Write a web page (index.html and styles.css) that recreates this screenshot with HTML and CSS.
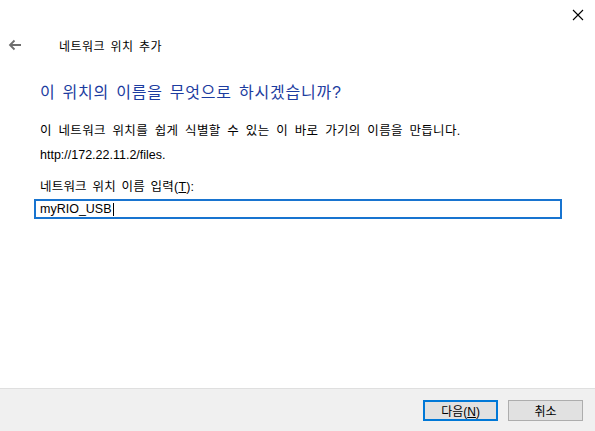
FILE: index.html
```html
<!DOCTYPE html>
<html lang="ko">
<head>
<meta charset="utf-8">
<link rel="stylesheet" href="styles.css">
</head>
<body>
<div class="window">
  <div class="titlebar">
    <svg class="close" width="12" height="12" viewBox="0 0 12 12"><path d="M1 1 L11 11 M11 1 L1 11" stroke="#000" stroke-width="1.1" fill="none"/></svg>
  </div>
  <div class="nav">
    <svg class="back" width="14" height="12" viewBox="0 0 14 12"><path d="M13 6 H2 M6.5 1.5 L2 6 L6.5 10.5" stroke="#6e6e6e" stroke-width="1.8" fill="none"/></svg>
    <span class="navtitle">네트워크 위치 추가</span>
  </div>
  <div class="content">
    <h1 class="heading">이 위치의 이름을 무엇으로 하시겠습니까?</h1>
    <p class="desc">이 네트워크 위치를 쉽게 식별할 수 있는 이 바로 가기의 이름을 만듭니다.</p>
    <p class="url">http://172.22.11.2/files.</p>
    <label class="label">네트워크 위치 이름 입력(<u>T</u>):</label>
    <div class="input">myRIO_USB<span class="caret"></span></div>
  </div>
  <div class="footer">
    <button class="btn primary">다음(<u>N</u>)</button>
    <button class="btn">취소</button>
  </div>
</div>
</body>
</html>
```
FILE: styles.css
```css
html, body { margin: 0; padding: 0; background: #fff; }
body { font-family: "Liberation Sans", "Noto Sans CJK KR", sans-serif; color: #000; }
.window { width: 595px; height: 431px; display: flex; flex-direction: column; }
.titlebar { height: 30px; display: flex; justify-content: flex-end; align-items: center; padding-right: 11px; }
.close { display: block; }
.nav { height: 30px; display: flex; align-items: center; }
.back { margin-left: 8px; }
.navtitle { margin-left: 37px; font-size: 12px; letter-spacing: 0.5px; word-spacing: 1.5px; }
.content { flex: 1; padding-left: 40px; padding-right: 33px; }
.heading { margin: 22px 0 0; font-size: 16px; font-weight: normal; color: #1c3ca0; line-height: 22px; letter-spacing: 0.8px; word-spacing: 1.8px; }
.desc { margin: 18px 0 0; font-size: 12.5px; line-height: 18px; letter-spacing: 0.3px; word-spacing: 3px; }
.url { margin: 6px 0 0; font-size: 12.5px; line-height: 18px; }
.label { display: block; margin: 14px 0 0; font-size: 12.5px; line-height: 18px; letter-spacing: 0.2px; word-spacing: 2px; }
.input { margin: 3px 0 0 -6px; height: 16px; border: 2px solid #1874d0; font-size: 12.5px; line-height: 16px; padding-left: 4px; display: flex; align-items: center; }
.caret { display: inline-block; width: 1px; height: 13px; background: #000; margin-left: 1px; }
.footer { height: 42px; background: #f0f0f0; border-top: 1px solid #dfdfdf; display: flex; justify-content: flex-end; align-items: center; padding-right: 12px; gap: 10px; }
.btn { width: 75px; height: 21px; font-family: inherit; font-size: 12px; background: #e1e1e1; border: 1px solid #adadad; padding: 0; color: #000; }
.btn.primary { border: 2px solid #0078d7; }
```
